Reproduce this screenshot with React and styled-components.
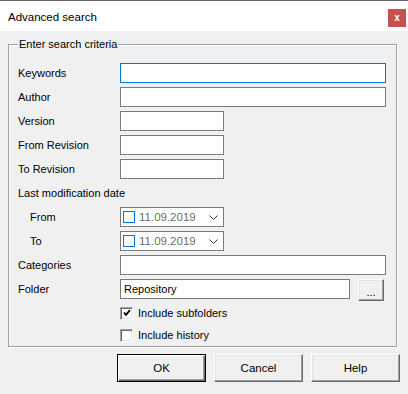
import React from "react";
import styled, { createGlobalStyle } from "styled-components";

const Global = createGlobalStyle`
  html, body { margin: 0; padding: 0; background: #f0f0f0; }
  body { font-family: "Liberation Sans", Arial, sans-serif; font-size: 11px; color: #000; }
  * { box-sizing: border-box; }
`;

const Window = styled.div`
  width: 408px;
  height: 394px;
  display: flex;
  flex-direction: column;
  background: #f0f0f0;
  border-top: 1px solid #646464;
  overflow: hidden;
`;

const TitleBar = styled.div`
  height: 30px;
  flex: none;
  background: #fff;
  display: flex;
  align-items: center;
  justify-content: space-between;
  padding: 0 2px 0 8px;
`;

const Title = styled.span`
  font-size: 11.5px;
  color: #000;
  margin-top: 2px;
`;

const CloseBtn = styled.div`
  width: 18px;
  height: 18px;
  margin-top: 4px;
  background: #c75050;
  color: #fff;
  font-weight: bold;
  font-size: 10px;
  display: flex;
  align-items: center;
  justify-content: center;
  line-height: 1;
`;

const Client = styled.div`
  flex: 1;
  display: flex;
  flex-direction: column;
  padding: 7px 0 0 8px;
`;

const Group = styled.fieldset`
  margin: 0;
  padding: 0 10px 6px 9px;
  width: 389px;
  height: 309px;
  border: 1px solid #a0a0a0;
  box-shadow: 1px 1px 0 #fff, inset 1px 1px 0 #fff;
  min-inline-size: 0;
`;

const Legend = styled.legend`
  margin-left: 0;
  padding: 0 1px;
  line-height: 13px;
  background: #f0f0f0;
`;

const Form = styled.div`
  display: grid;
  grid-template-columns: 102px 1fr;
  grid-auto-rows: 20px;
  row-gap: 4px;
  align-items: center;
  padding-top: 12px;
`;

const Label = styled.div`
  padding-left: ${(p) => (p.$indent ? "12px" : "0")};
  grid-column: ${(p) => (p.$full ? "1 / -1" : "auto")};
  white-space: nowrap;
`;

const TextBox = styled.div`
  height: 20px;
  width: ${(p) => (p.$w ? `${p.$w}px` : "100%")};
  background: #fff;
  border: 1px solid ${(p) => (p.$focus ? "#0078d7" : "#7a7a7a")};
  display: flex;
  align-items: center;
  padding-left: 3px;
`;

const FolderRow = styled.div`
  display: flex;
  gap: 8px;
  align-items: flex-start;
  height: 20px;
`;

const DatePicker = styled.div`
  width: 104px;
  height: 20px;
  background: #fff;
  border: 1px solid #7a7a7a;
  display: flex;
  align-items: center;
  padding: 0 5px 0 2px;
`;

const DateCheck = styled.span`
  width: 12px;
  height: 12px;
  border: 1px solid #0078d7;
  background: #fff;
  flex: none;
`;

const DateText = styled.span`
  color: #6d6d6d;
  margin-left: 4px;
  flex: 1;
  font-size: 11.5px;
`;

const SmallBtn = styled.div`
  width: 26px;
  height: 22px;
  flex: none;
  background: #f0f0f0;
  border: 1px solid;
  border-color: #fff #696969 #696969 #fff;
  box-shadow: inset -1px -1px 0 #a0a0a0, inset 1px 1px 0 #e3e3e3;
  display: flex;
  align-items: center;
  justify-content: center;
  padding-top: 4px;
`;

const ChecksList = styled.div`
  display: flex;
  flex-direction: column;
  gap: 2px;
  padding: 4px 0 0 102px;
`;

const CheckRow = styled.label`
  display: flex;
  align-items: center;
  height: 20px;
  gap: 5px;
`;

const CheckBox = styled.span`
  width: 13px;
  height: 13px;
  background: #fff;
  border: 1px solid;
  border-color: #a0a0a0 #fff #fff #a0a0a0;
  box-shadow: inset 1px 1px 0 #696969, inset -1px -1px 0 #e3e3e3;
  display: flex;
  align-items: center;
  justify-content: center;
`;

const ButtonBar = styled.div`
  display: flex;
  justify-content: flex-end;
  gap: 8px;
  padding: 7px 8px 0 0;
`;

const Button = styled.div`
  width: 89px;
  height: 28px;
  background: #f0f0f0;
  display: flex;
  align-items: center;
  justify-content: center;
  border: 1px solid;
  border-color: ${(p) => (p.$default ? "#000" : "#fff #696969 #696969 #fff")};
  box-shadow: ${(p) =>
    p.$default
      ? "inset 1px 1px 0 #fff, inset -1px -1px 0 #696969, inset -2px -2px 0 #a0a0a0"
      : "inset -1px -1px 0 #a0a0a0, inset 1px 1px 0 #e3e3e3"};
  font-size: 11.5px;
`;

const Chevron = () => (
  <svg width="9" height="5" viewBox="0 0 9 5">
    <path d="M0.5 0.5 L4.5 4.5 L8.5 0.5" fill="none" stroke="#333" strokeWidth="1" />
  </svg>
);

const Check = () => (
  <svg width="8" height="8" viewBox="0 0 8 8">
    <path d="M1 3.5 L3 5.8 L7 1.2" fill="none" stroke="#000" strokeWidth="1.8" />
  </svg>
);

export default function App() {
  return (
    <>
      <Global />
      <Window>
        <TitleBar>
          <Title>Advanced search</Title>
          <CloseBtn>x</CloseBtn>
        </TitleBar>
        <Client>
          <Group>
            <Legend>Enter search criteria</Legend>
            <Form>
              <Label>Keywords</Label>
              <TextBox $focus />
              <Label>Author</Label>
              <TextBox />
              <Label>Version</Label>
              <TextBox $w={104} />
              <Label>From Revision</Label>
              <TextBox $w={104} />
              <Label>To Revision</Label>
              <TextBox $w={104} />
              <Label $full>Last modification date</Label>
              <Label $indent>From</Label>
              <DatePicker>
                <DateCheck />
                <DateText>11.09.2019</DateText>
                <Chevron />
              </DatePicker>
              <Label $indent>To</Label>
              <DatePicker>
                <DateCheck />
                <DateText>11.09.2019</DateText>
                <Chevron />
              </DatePicker>
              <Label>Categories</Label>
              <TextBox />
              <Label>Folder</Label>
              <FolderRow>
                <TextBox $w={230}>Repository</TextBox>
                <SmallBtn>...</SmallBtn>
              </FolderRow>
            </Form>
            <ChecksList>
              <CheckRow>
                <CheckBox>
                  <Check />
                </CheckBox>
                Include subfolders
              </CheckRow>
              <CheckRow>
                <CheckBox />
                Include history
              </CheckRow>
            </ChecksList>
          </Group>
          <ButtonBar>
            <Button $default>OK</Button>
            <Button>Cancel</Button>
            <Button>Help</Button>
          </ButtonBar>
        </Client>
      </Window>
    </>
  );
}
